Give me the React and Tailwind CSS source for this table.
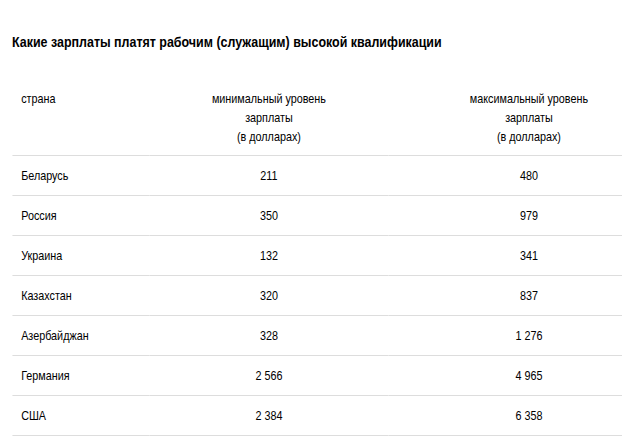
const rows = [
  ['Беларусь', '211', '480'],
  ['Россия', '350', '979'],
  ['Украина', '132', '341'],
  ['Казахстан', '320', '837'],
  ['Азербайджан', '328', '1 276'],
  ['Германия', '2 566', '4 965'],
  ['США', '2 384', '6 358'],
];

export default function App() {
  return (
    <div className="w-[622px] h-[440px] overflow-hidden bg-white text-black font-['Liberation_Sans',Arial,sans-serif]">
      {/* the source renders a narrow face; squeeze horizontally to match */}
      <div className="w-[750px] pl-[14.5px] pt-[32px] origin-left scale-x-[0.83]">
        <h2 className="text-[15px] leading-5 font-bold">
          Какие зарплаты платят рабочим (служащим) высокой квалификации
        </h2>
        <table className="mt-[26px] w-[792px] table-fixed border-collapse text-[13px] leading-[19px]">
          <thead>
            <tr className="border-b border-[#dddddd]">
              <th className="w-[165.5px] px-[11px] pt-[11px] pb-[9px] text-left align-top font-normal">страна</th>
              <th className="w-[288px] px-[11px] pt-[11px] pb-[9px] text-center align-top font-normal">
                минимальный уровень<br />зарплаты<br />(в долларах)
              </th>
              <th className="px-[11px] pt-[11px] pb-[9px] text-center align-top font-normal">
                максимальный уровень<br />зарплаты<br />(в долларах)
              </th>
            </tr>
          </thead>
          <tbody>
            {rows.map((r) => (
              <tr key={r[0]} className="border-b border-[#dddddd]">
                <td className="px-[11px] py-[10px] text-left">{r[0]}</td>
                <td className="px-[11px] py-[10px] text-center">{r[1]}</td>
                <td className="px-[11px] py-[10px] text-center">{r[2]}</td>
              </tr>
            ))}
          </tbody>
        </table>
      </div>
    </div>
  );
}
